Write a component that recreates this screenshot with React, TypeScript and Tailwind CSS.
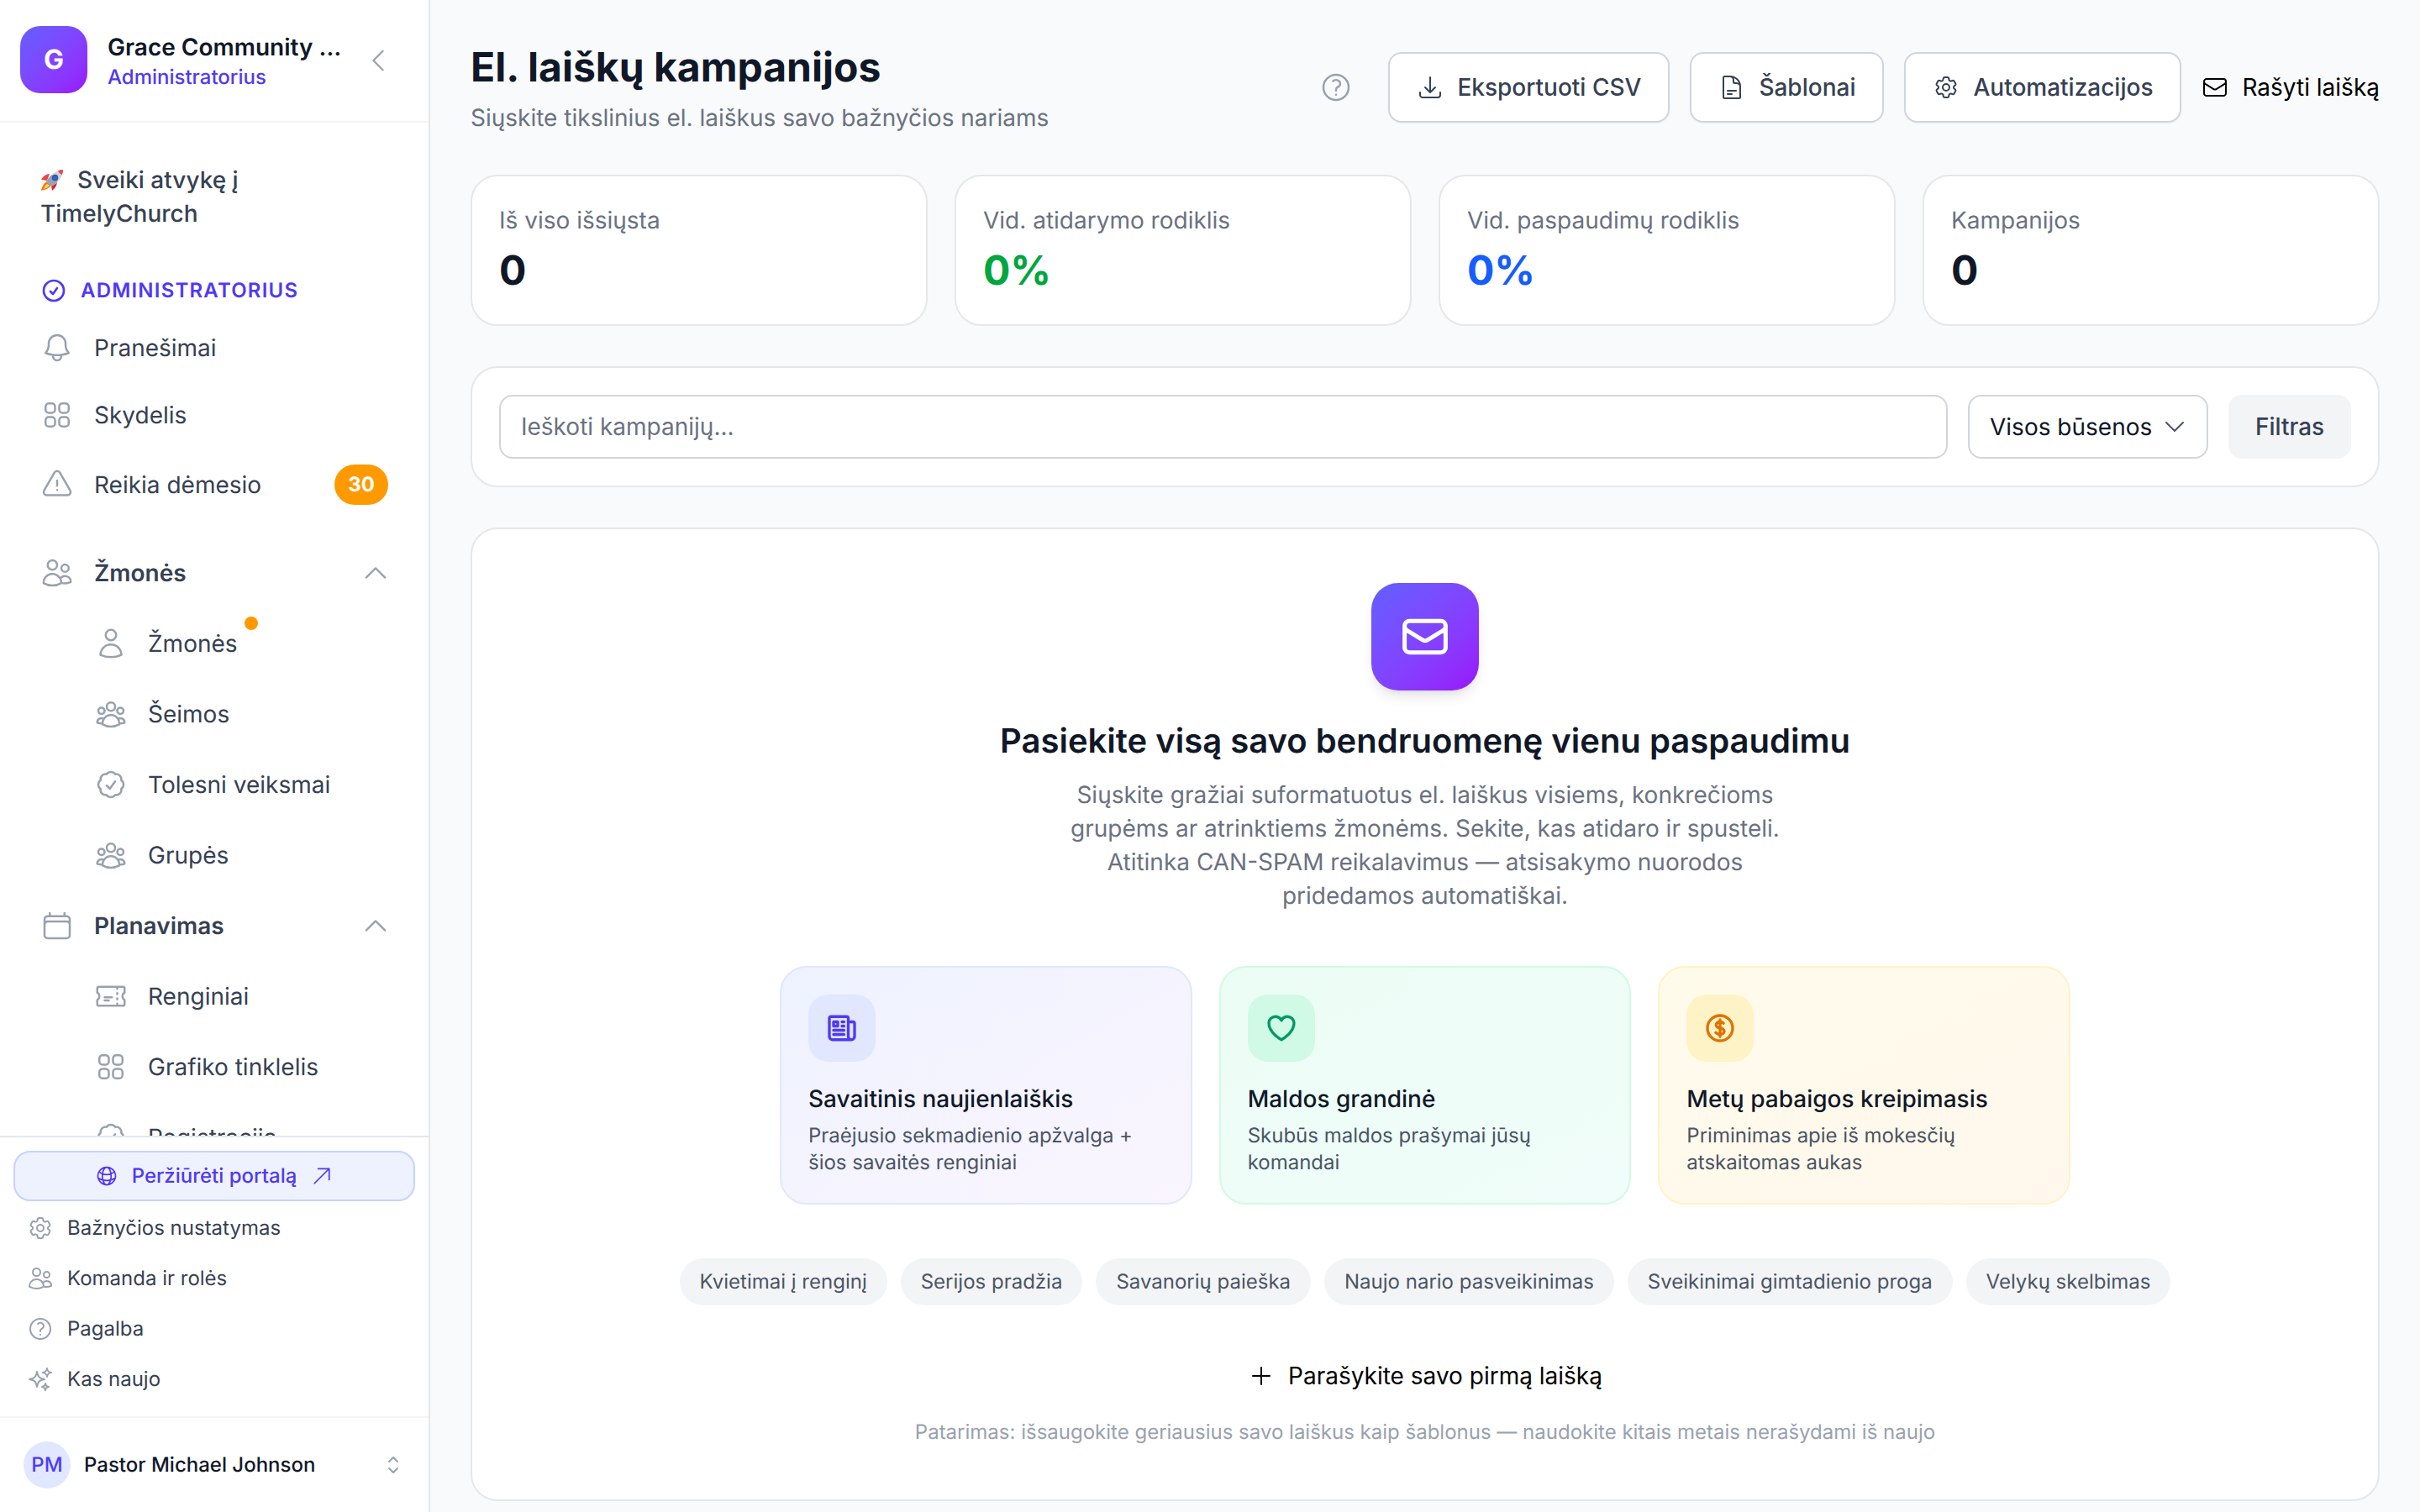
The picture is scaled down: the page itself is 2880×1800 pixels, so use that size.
import type { ComponentType, ReactNode } from 'react'
import {
  HiOutlineArrowDownTray,
  HiOutlineArrowUpRight,
  HiOutlineBell,
  HiOutlineCalendar,
  HiOutlineCheckBadge,
  HiOutlineCheckCircle,
  HiOutlineChevronDown,
  HiOutlineChevronLeft,
  HiOutlineChevronUp,
  HiOutlineChevronUpDown,
  HiOutlineCog6Tooth,
  HiOutlineCurrencyDollar,
  HiOutlineDocumentText,
  HiOutlineEnvelope,
  HiOutlineExclamationTriangle,
  HiOutlineGlobeAlt,
  HiOutlineHeart,
  HiOutlineNewspaper,
  HiOutlinePlus,
  HiOutlineQuestionMarkCircle,
  HiOutlineSparkles,
  HiOutlineSquares2X2,
  HiOutlineTicket,
  HiOutlineUser,
  HiOutlineUserGroup,
  HiOutlineUsers,
} from 'react-icons/hi2'

type Icon = ComponentType<{ className?: string; strokeWidth?: number }>

type NavRowProps = {
  icon: Icon
  label: string
  sub?: boolean
  strong?: boolean
  open?: boolean
  className?: string
  children?: ReactNode
}

const stats = [
  { label: 'Iš viso išsiųsta', value: '0', color: 'text-gray-900' },
  { label: 'Vid. atidarymo rodiklis', value: '0%', color: 'text-green-600' },
  { label: 'Vid. paspaudimų rodiklis', value: '0%', color: 'text-blue-600' },
  { label: 'Kampanijos', value: '0', color: 'text-gray-900' },
]

const ideas = [
  {
    icon: HiOutlineNewspaper,
    title: 'Savaitinis naujienlaiškis',
    text: 'Praėjusio sekmadienio apžvalga + šios savaitės renginiai',
    card: 'border-indigo-100 from-indigo-50 to-purple-50',
    badge: 'bg-indigo-100 text-indigo-600',
  },
  {
    icon: HiOutlineHeart,
    title: 'Maldos grandinė',
    text: 'Skubūs maldos prašymai jūsų komandai',
    card: 'border-emerald-100 from-emerald-50 to-teal-50',
    badge: 'bg-emerald-100 text-emerald-600',
  },
  {
    icon: HiOutlineCurrencyDollar,
    title: 'Metų pabaigos kreipimasis',
    text: 'Priminimas apie iš mokesčių atskaitomas aukas',
    card: 'border-amber-100 from-amber-50 to-orange-50',
    badge: 'bg-amber-100 text-amber-600',
  },
]

const chips = [
  'Kvietimai į renginį',
  'Serijos pradžia',
  'Savanorių paieška',
  'Naujo nario pasveikinimas',
  'Sveikinimai gimtadienio proga',
  'Velykų skelbimas',
]

const footerLinks = [
  { icon: HiOutlineCog6Tooth, label: 'Bažnyčios nustatymas' },
  { icon: HiOutlineUsers, label: 'Komanda ir rolės' },
  { icon: HiOutlineQuestionMarkCircle, label: 'Pagalba' },
  { icon: HiOutlineSparkles, label: 'Kas naujo' },
]

function Rocket() {
  return (
    <svg viewBox="0 0 28 27" className="mr-[16px] inline-block h-[27px] w-[28px] align-[-4px]">
      {/* flame */}
      <path d="M9 15c-4 1-7 5-8 11 5-1 10-3 12-7z" fill="#f97316" />
      <path d="M8 18c-2 1-3 3-4 6 3-1 5-2 7-4z" fill="#fde047" />
      {/* fins */}
      <path d="M11 6C7 6 3 9 1 13l7 1z" fill="#ef4444" />
      <path d="M20 15c0 4-2 8-6 11l-1-6z" fill="#dc2626" />
      {/* body */}
      <path d="M7 15C11 8 18 2 27 1c0 9-6 16-14 20z" fill="#cbd5e1" />
      <path d="M7 15c2-3 4-6 7-8 1 4 3 6 7 7-2 3-5 5-8 7z" fill="#94a3b8" />
      <path d="M21 2.200c2-.7 4-1.100 6-1.200 0 2-.4 4-1.200 6-2-.7-3.800-2.500-4.800-4.800z" fill="#ef4444" />
      <circle cx="17.500" cy="10.500" r="3.200" fill="#2563eb" stroke="#475569" strokeWidth="1.200" />
    </svg>
  )
}

function NavRow({ icon: RowIcon, label, sub, strong, open, className, children }: NavRowProps) {
  return (
    <div className={`flex h-[80px] shrink-0 items-center ${sub ? 'pl-[112px]' : 'pl-[48px]'} pr-[54px] ${className ?? ''}`}>
      <RowIcon className="mr-[24px] size-[40px] shrink-0 text-gray-400" />
      <span className={`relative text-[28px] leading-[40px] text-gray-700 ${strong ? 'font-semibold' : ''}`}>
        {label}
        {children}
      </span>
      {open && <HiOutlineChevronUp className="mr-[-9px] ml-auto size-[36px] text-gray-400" />}
    </div>
  )
}

function Sidebar() {
  return (
    <aside className="flex h-full w-[512px] shrink-0 flex-col border-r-2 border-gray-200 bg-white">
      <div className="flex h-[146px] shrink-0 items-center border-b-2 border-gray-100 pr-[42px] pb-[2px] pl-[24px]">
        <div className="flex size-[80px] shrink-0 items-center justify-center rounded-[24px] bg-gradient-to-br from-indigo-500 to-purple-600 text-[32px] font-bold text-white">
          G
        </div>
        <div className="mt-[2px] ml-[24px] w-[282px] min-w-0">
          <div className="truncate text-[28px] leading-[40px] font-semibold text-gray-900">Grace Community Church</div>
          <div className="text-[24px] leading-[32px] font-medium text-indigo-600">Administratorius</div>
        </div>
        <HiOutlineChevronLeft className="mt-[2px] ml-auto size-[36px] text-gray-400" />
      </div>

      <nav className="min-h-0 flex-1 overflow-hidden">
        <p className="mt-[48px] ml-[48px] w-[360px] text-[28px] leading-[40px] font-medium text-gray-700">
          <Rocket />
          Sveiki atvykę į TimelyChurch
        </p>
        <div className="mt-[56px] flex items-center pl-[48px] text-[24px] leading-[32px] font-semibold tracking-[1.2px] text-indigo-600">
          <HiOutlineCheckCircle className="mr-[16px] size-[32px]" strokeWidth={2} />
          ADMINISTRATORIUS
        </div>
        <div className="mt-[12px] flex flex-col">
          <NavRow icon={HiOutlineBell} label="Pranešimai" />
          <NavRow icon={HiOutlineSquares2X2} label="Skydelis" />
          <NavRow icon={HiOutlineExclamationTriangle} label="Reikia dėmesio" className="mt-[3px]" />
        </div>
        <div className="relative">
          <span className="absolute top-[-64px] left-[398px] flex h-[48px] w-[64px] items-center justify-center rounded-full bg-amber-500 text-[24px] font-bold text-white">
            30
          </span>
        </div>
        <div className="mt-[25px] flex flex-col gap-[4px]">
          <NavRow icon={HiOutlineUsers} label="Žmonės" strong open />
          <NavRow icon={HiOutlineUser} label="Žmonės" sub>
            <span className="absolute top-[-12px] right-[-24px] size-[16px] rounded-full bg-amber-500" />
          </NavRow>
          <NavRow icon={HiOutlineUserGroup} label="Šeimos" sub />
          <NavRow icon={HiOutlineCheckBadge} label="Tolesni veiksmai" sub />
          <NavRow icon={HiOutlineUserGroup} label="Grupės" sub />
          <NavRow icon={HiOutlineCalendar} label="Planavimas" strong open />
          <NavRow icon={HiOutlineTicket} label="Renginiai" sub />
          <NavRow icon={HiOutlineSquares2X2} label="Grafiko tinklelis" sub />
          <NavRow icon={HiOutlineCheckBadge} label="Registracija" sub />
        </div>
      </nav>

      <div className="shrink-0 border-t-2 border-gray-200 p-[16px] pb-0">
        <div className="flex h-[60px] items-center justify-center rounded-[20px] border-2 border-indigo-200 bg-indigo-50 text-[24px] font-medium text-indigo-600">
          <HiOutlineGlobeAlt className="mr-[16px] size-[28px]" />
          Peržiūrėti portalą
          <HiOutlineArrowUpRight className="ml-[16px] size-[28px]" />
        </div>
      </div>
      <div className="mt-[2px] flex shrink-0 flex-col pb-[14px]">
        {footerLinks.map((link) => (
          <div key={link.label} className="flex h-[60px] items-center pl-[32px] text-[24px] text-gray-700">
            <link.icon className="mr-[16px] size-[32px] text-gray-400" />
            {link.label}
          </div>
        ))}
      </div>
      <div className="flex h-[114px] shrink-0 items-center border-t-2 border-gray-100 pr-[26px] pl-[28px]">
        <div className="flex size-[56px] items-center justify-center rounded-full bg-indigo-100 text-[24px] font-medium text-indigo-600">
          PM
        </div>
        <span className="ml-[16px] text-[24px] font-medium text-gray-900">Pastor Michael Johnson</span>
        <HiOutlineChevronUpDown className="ml-auto size-[32px] text-gray-400" />
      </div>
    </aside>
  )
}

function OutlineButton({ icon: ButtonIcon, label }: { icon: Icon; label: string }) {
  return (
    <button
      type="button"
      className="flex h-[84px] items-center gap-[16px] rounded-[16px] border-2 border-gray-300 bg-white px-[32px] text-[28px] leading-[40px] font-medium text-gray-700 shadow-xs"
    >
      <ButtonIcon className="size-[32px]" />
      {label}
    </button>
  )
}

function Header() {
  return (
    <div className="flex items-center justify-between">
      <div>
        <h1 className="text-[48px] leading-[64px] font-bold text-gray-900">El. laiškų kampanijos</h1>
        <p className="mt-[8px] text-[28px] leading-[40px] text-gray-500">
          Siųskite tikslinius el. laiškus savo bažnyčios nariams
        </p>
      </div>
      <div className="flex items-center gap-[24px]">
        <HiOutlineQuestionMarkCircle className="mr-[18px] size-[40px] text-gray-400" />
        <OutlineButton icon={HiOutlineArrowDownTray} label="Eksportuoti CSV" />
        <OutlineButton icon={HiOutlineDocumentText} label="Šablonai" />
        <OutlineButton icon={HiOutlineCog6Tooth} label="Automatizacijos" />
        <button type="button" className="flex h-[84px] items-center gap-[16px] text-[28px] leading-[40px] text-black">
          <HiOutlineEnvelope className="size-[32px]" />
          Rašyti laišką
        </button>
      </div>
    </div>
  )
}

function EmptyState() {
  return (
    <section className="mt-[48px] flex flex-col items-center rounded-[32px] border-2 border-gray-200 bg-white px-[64px] pt-[64px] pb-[64px]">
      <div className="flex size-[128px] items-center justify-center rounded-[32px] bg-gradient-to-br from-indigo-500 to-purple-600 text-white shadow-lg">
        <HiOutlineEnvelope className="size-[60px]" strokeWidth={2} />
      </div>
      <h2 className="mt-[32px] text-[40px] leading-[56px] font-semibold text-gray-900">
        Pasiekite visą savo bendruomenę vienu paspaudimu
      </h2>
      <p className="mt-[16px] max-w-[896px] text-center text-[28px] leading-[40px] text-gray-500">
        Siųskite gražiai suformatuotus el. laiškus visiems, konkrečioms grupėms ar atrinktiems žmonėms. Sekite, kas
        atidaro ir spusteli. Atitinka CAN-SPAM reikalavimus — atsisakymo nuorodos pridedamos automatiškai.
      </p>

      <div className="mt-[64px] grid w-[1536px] grid-cols-3 gap-[32px]">
        {ideas.map((idea) => (
          <div key={idea.title} className={`rounded-[32px] border-2 bg-gradient-to-br p-[32px] ${idea.card}`}>
            <div className={`flex size-[80px] items-center justify-center rounded-[24px] ${idea.badge}`}>
              <idea.icon className="size-[40px]" strokeWidth={2} />
            </div>
            <h3 className="mt-[24px] text-[28px] leading-[40px] font-medium text-gray-900">{idea.title}</h3>
            <p className="mt-[8px] text-[24px] leading-[32px] text-gray-600">{idea.text}</p>
          </div>
        ))}
      </div>

      <div className="mt-[64px] flex gap-[16px]">
        {chips.map((chip) => (
          <span key={chip} className="rounded-full bg-gray-100 px-[24px] py-[12px] text-[24px] leading-[32px] text-gray-600">
            {chip}
          </span>
        ))}
      </div>

      <button type="button" className="mt-[48px] flex h-[72px] items-center gap-[16px] text-[28px] leading-[40px] text-black">
        <HiOutlinePlus className="size-[32px]" />
        Parašykite savo pirmą laišką
      </button>
      <p className="mt-[15px] text-[24px] leading-[32px] text-gray-400">
        Patarimas: išsaugokite geriausius savo laiškus kaip šablonus — naudokite kitais metais nerašydami iš naujo
      </p>
    </section>
  )
}

export default function App() {
  return (
    <div className="flex h-screen overflow-hidden bg-gray-50 font-[Inter,sans-serif] [text-rendering:geometricPrecision]">
      <Sidebar />
      <main className="min-w-0 flex-1 overflow-hidden px-[48px] pt-[48px]">
        <Header />

        <div className="mt-[48px] grid grid-cols-4 gap-[32px]">
          {stats.map((stat) => (
            <div key={stat.label} className="h-[180px] rounded-[32px] border-2 border-gray-200 bg-white p-[32px]">
              <div className="text-[28px] leading-[40px] text-gray-500">{stat.label}</div>
              <div className={`mt-[8px] text-[48px] leading-[64px] font-bold ${stat.color}`}>{stat.value}</div>
            </div>
          ))}
        </div>

        <div className="mt-[48px] flex items-center gap-[24px] rounded-[32px] border-2 border-gray-200 bg-white p-[32px]">
          <input
            type="text"
            placeholder="Ieškoti kampanijų..."
            className="h-[76px] min-w-0 flex-1 rounded-[16px] border-2 border-gray-300 px-[24px] text-[28px] outline-none placeholder:text-gray-500"
          />
          <div className="flex h-[76px] w-[286px] items-center rounded-[16px] border-2 border-gray-300 pr-[22px] pl-[24px] text-[28px] text-gray-900">
            Visos būsenos
            <HiOutlineChevronDown className="ml-auto size-[32px] text-gray-600" />
          </div>
          <button type="button" className="h-[76px] w-[146px] rounded-[16px] bg-gray-100 text-[28px] font-medium text-gray-700">
            Filtras
          </button>
        </div>

        <EmptyState />
      </main>
    </div>
  )
}
